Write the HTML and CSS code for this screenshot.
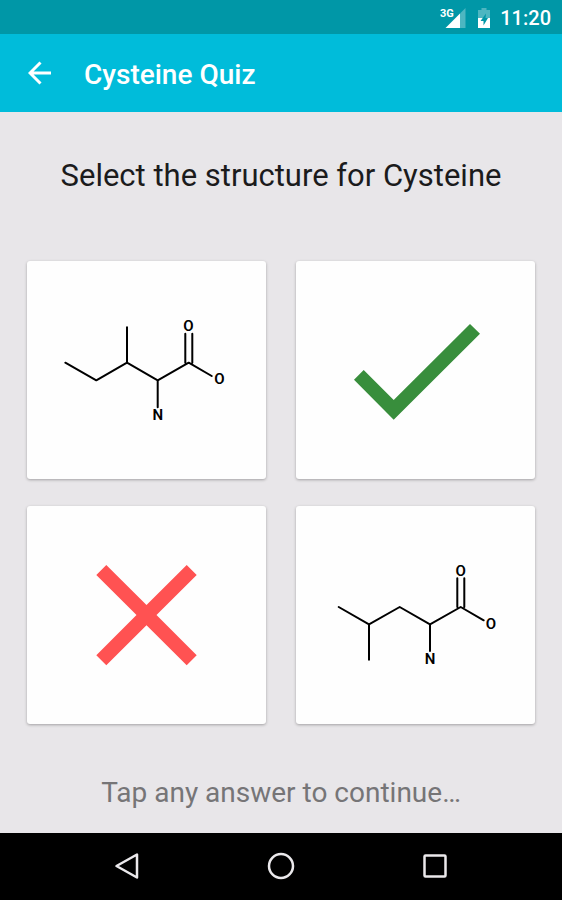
FILE: index.html
```html
<!DOCTYPE html>
<html lang="en">
<head>
<meta charset="utf-8">
<meta name="viewport" content="width=device-width, initial-scale=1">
<title>Cysteine Quiz</title>
<link rel="stylesheet" href="styles.css">
</head>
<body>
<div class="status-bar">
  <svg class="signal" viewBox="0 0 26 22" role="img" aria-label="3G signal">
    <path class="dim" d="M20 6.5L25.5 1v20H20z"/>
    <path class="solid" d="M5.5 21L20 6.5V21z"/>
    <text x="0" y="10">3G</text>
  </svg>
  <svg class="battery" viewBox="0 0 14 22" role="img" aria-label="Battery charging">
    <path class="dim" d="M1 3h3.5V1h5v2H13v8H1z"/>
    <path class="solid" d="M1 11h12v10H1z"/>
    <path class="bolt" d="M9 6.500L3.500 14H6.500V18.500L11 11H8.500z"/>
  </svg>
  <time class="clock">11:20</time>
</div>
<header class="app-bar">
  <button class="back" type="button" aria-label="Back">
    <svg viewBox="0 0 24 24"><path d="M23 12H2M12.5 1.5L2 12l10.500 10.500"/></svg>
  </button>
  <h1>Cysteine Quiz</h1>
</header>
<main class="quiz">
  <h2>Select the structure for Cysteine</h2>
  <div class="answers">
    <button class="card" type="button" aria-label="Answer 1">
      <svg class="molecule" viewBox="0 0 239 218">
        <path d="M38.300 101.700L69.300 119.300L100 101.700L130.700 119.300L161.700 101.700L184.700 115M100 101.700V66.300M130.700 119.300V146.300M158.300 101.700V72.800M165.300 101.700V72.800"/>
        <text x="161.500" y="70">O</text>
        <text x="192.500" y="123">O</text>
        <text x="130.700" y="159">N</text>
      </svg>
    </button>
    <button class="card" type="button" aria-label="Answer 2, correct">
      <svg viewBox="0 0 239 218"><path class="correct" d="M174 63L184 72.700L97.700 158.700L58 118.700L67.700 109L97.700 139z"/></svg>
    </button>
    <button class="card" type="button" aria-label="Answer 3, wrong">
      <svg viewBox="0 0 239 218"><path class="wrong" d="M79.300 59L119.500 99L159.700 59L169.700 69L129.500 109L169.700 149.300L159.700 159.300L119.500 119.300L79.300 159.300L69.300 149.300L109.500 109L69.300 69z"/></svg>
    </button>
    <button class="card" type="button" aria-label="Answer 4">
      <svg class="molecule" viewBox="0 0 239 218">
        <path d="M42.700 101L73 118.300L103.700 101L134 118.300L164.700 101L187.700 114.300M73 118.300V153.700M134 118.300V145M161.300 101V72.300M168.300 101V72.300"/>
        <text x="164.700" y="69.500">O</text>
        <text x="195" y="122.500">O</text>
        <text x="134" y="158">N</text>
      </svg>
    </button>
  </div>
  <p class="hint">Tap any answer to continue…</p>
</main>
<nav class="system-nav" aria-label="System">
  <button type="button" aria-label="Back"><svg viewBox="0 0 30 30"><path d="M25 3.500V26.500L4.500 15z"/></svg></button>
  <button type="button" aria-label="Home"><svg viewBox="0 0 30 30"><circle cx="15" cy="15" r="12"/></svg></button>
  <button type="button" aria-label="Recent apps"><svg viewBox="0 0 30 30"><rect x="4.500" y="4.500" width="21" height="21" rx="1"/></svg></button>
</nav>
</body>
</html>
```

FILE: styles.css
```css
* {
  box-sizing: border-box;
}

body {
  margin: 0;
  min-height: 100vh;
  display: flex;
  flex-direction: column;
  background: #e8e6e9;
  color: #1b1b1c;
  font-family: Roboto, sans-serif;
}

h1,
h2,
p {
  margin: 0;
}

button {
  border: 0;
  padding: 0;
  background: none;
  font-family: inherit;
  cursor: pointer;
}

svg {
  display: block;
}

.status-bar {
  height: 34px;
  padding: 2px 11px 0;
  display: flex;
  align-items: center;
  justify-content: flex-end;
  background: #0097a7;
  color: #fff;
}

.signal {
  width: 26px;
  height: 22px;
  margin-right: 11px;
}

.battery {
  width: 14px;
  height: 22px;
  margin-right: 9px;
}

.signal text {
  fill: #fff;
  font-size: 11px;
  font-weight: 700;
  stroke: #0097a7;
  stroke-width: 2px;
  paint-order: stroke;
}

.dim {
  fill: #4db6c1;
}

.solid {
  fill: #fff;
}

.bolt {
  fill: #0097a7;
}

.clock {
  font-size: 20px;
  font-weight: 500;
}

.app-bar {
  height: 78px;
  padding: 0 28px;
  display: flex;
  align-items: center;
  gap: 32px;
  background: #00bcda;
  color: #fff;
}

.back svg {
  width: 24px;
  height: 24px;
  fill: none;
  stroke: #fff;
  stroke-width: 3;
}

h1 {
  padding-top: 3px;
  font-size: 28px;
  line-height: 32px;
  font-weight: 500;
}

.quiz {
  flex: 1;
  padding: 44px 27px 20px;
  display: flex;
  flex-direction: column;
  justify-content: space-between;
  text-align: center;
}

h2 {
  font-size: 31px;
  line-height: 40px;
  font-weight: 400;
}

.answers {
  margin-top: 16px;
  display: grid;
  grid-template-columns: 1fr 1fr;
  gap: 27px 30px;
}

.card {
  border-radius: 3px;
  background: #fefefe;
  box-shadow: 0 1px 3px rgba(0, 0, 0, 0.3);
}

.card svg {
  width: 100%;
}

.molecule path {
  fill: none;
  stroke: #000;
  stroke-width: 2;
  stroke-linecap: round;
  stroke-linejoin: round;
}

.molecule text {
  fill: #000;
  font-size: 15px;
  font-weight: 600;
  text-anchor: middle;
}

.correct {
  fill: #388e3c;
}

.wrong {
  fill: #ff5252;
}

.hint {
  color: #767577;
  font-size: 28px;
  line-height: 40px;
}

.system-nav {
  height: 67px;
  padding: 0 50px 1px;
  display: grid;
  grid-template-columns: repeat(3, 1fr);
  place-items: center;
  background: #000;
}

.system-nav svg {
  width: 30px;
  height: 30px;
  fill: none;
  stroke: #ebe9ec;
  stroke-width: 2.5;
  stroke-linejoin: round;
}
```
